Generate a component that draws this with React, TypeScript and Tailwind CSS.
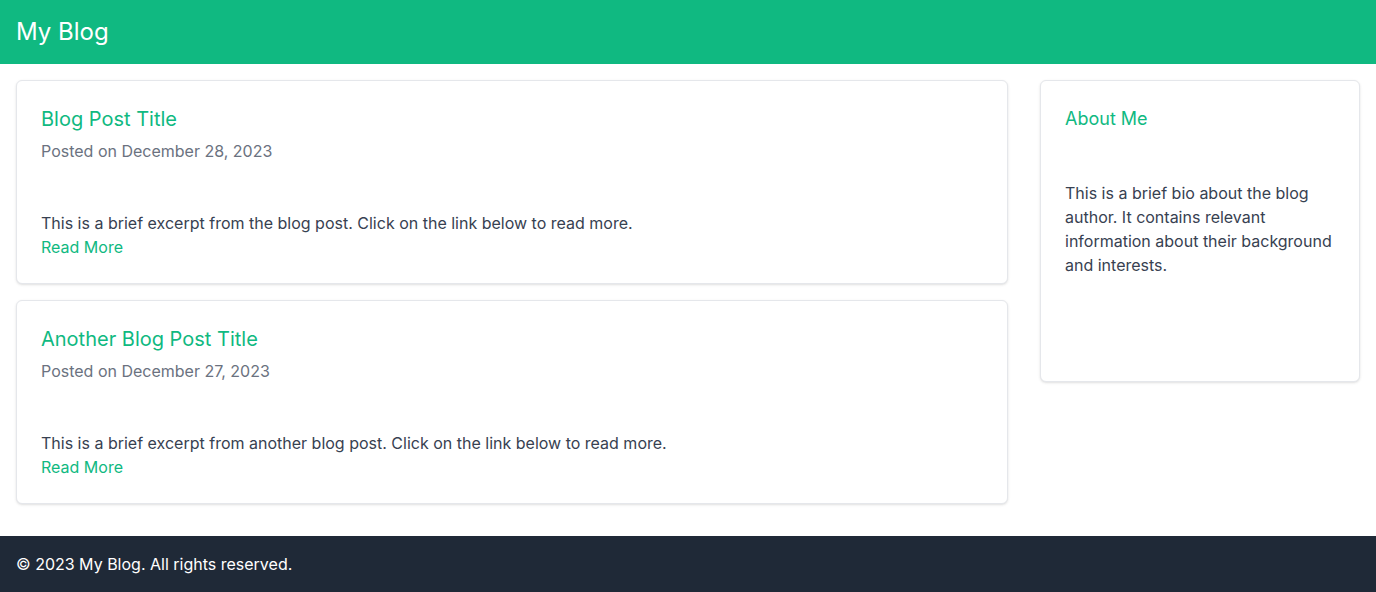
const posts = [
  {
    id: 1,
    title: 'Blog Post Title',
    date: 'December 28, 2023',
    excerpt: 'This is a brief excerpt from the blog post. Click on the link below to read more.',
  },
  {
    id: 2,
    title: 'Another Blog Post Title',
    date: 'December 27, 2023',
    excerpt: 'This is a brief excerpt from another blog post. Click on the link below to read more.',
  },
];

export default function App() {
  return (
    <div className="min-h-screen bg-white font-['Inter',sans-serif]">
      <header className="bg-[#10b981] p-4">
        <h1 className="text-2xl text-white">My Blog</h1>
      </header>

      <main className="flex gap-8 p-4">
        <div className="flex-1 flex flex-col gap-4">
          {posts.map((post) => (
            <article key={post.id} className="bg-white border border-[#e5e7eb] rounded-md shadow-sm p-6">
              <h2 className="text-xl text-[#10b981]">{post.title}</h2>
              <p className="mt-1.5 text-[#6b7280]">Posted on {post.date}</p>
              <p className="mt-12 text-[#374151]">{post.excerpt}</p>
              <a href="#" className="block text-[#10b981]">
                Read More
              </a>
            </article>
          ))}
        </div>

        <aside className="w-80 shrink-0">
          <div className="bg-white border border-[#e5e7eb] rounded-md shadow-sm p-6">
            <h3 className="text-lg text-[#10b981]">About Me</h3>
            <p className="mt-12 mb-20 text-[#374151]">
              This is a brief bio about the blog author. It contains relevant information about their background and
              interests.
            </p>
          </div>
        </aside>
      </main>

      <footer className="mt-4 bg-[#1f2937] p-4 text-white">
        <p>© 2023 My Blog. All rights reserved.</p>
      </footer>
    </div>
  );
}
